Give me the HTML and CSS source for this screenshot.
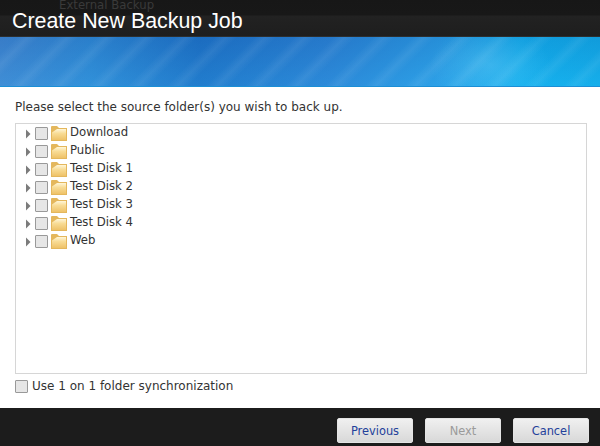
FILE: index.html
```html
<!DOCTYPE html>
<html lang="en">
<head>
<meta charset="utf-8">
<title>Create New Backup Job</title>
<link rel="stylesheet" href="styles.css">
</head>
<body>
<div class="dialog">
  <header class="title-bar">
    <span class="ghost">External Backup</span>
    <h1 class="title">Create New Backup Job</h1>
  </header>
  <div class="banner"></div>
  <main class="content">
    <p class="prompt">Please select the source folder(s) you wish to back up.</p>
    <ul class="tree">
      <li class="row"><svg class="arrow" viewBox="0 0 6 10"><path d="M1 0.5 5.5 5 1 9.5Z"/></svg><span class="check"></span><svg class="folder" viewBox="0 0 16 15"><use href="#f"/></svg><span>Download</span></li>
      <li class="row"><svg class="arrow" viewBox="0 0 6 10"><path d="M1 0.5 5.5 5 1 9.5Z"/></svg><span class="check"></span><svg class="folder" viewBox="0 0 16 15"><use href="#f"/></svg><span>Public</span></li>
      <li class="row"><svg class="arrow" viewBox="0 0 6 10"><path d="M1 0.5 5.5 5 1 9.5Z"/></svg><span class="check"></span><svg class="folder" viewBox="0 0 16 15"><use href="#f"/></svg><span>Test Disk 1</span></li>
      <li class="row"><svg class="arrow" viewBox="0 0 6 10"><path d="M1 0.5 5.5 5 1 9.5Z"/></svg><span class="check"></span><svg class="folder" viewBox="0 0 16 15"><use href="#f"/></svg><span>Test Disk 2</span></li>
      <li class="row"><svg class="arrow" viewBox="0 0 6 10"><path d="M1 0.5 5.5 5 1 9.5Z"/></svg><span class="check"></span><svg class="folder" viewBox="0 0 16 15"><use href="#f"/></svg><span>Test Disk 3</span></li>
      <li class="row"><svg class="arrow" viewBox="0 0 6 10"><path d="M1 0.5 5.5 5 1 9.5Z"/></svg><span class="check"></span><svg class="folder" viewBox="0 0 16 15"><use href="#f"/></svg><span>Test Disk 4</span></li>
      <li class="row"><svg class="arrow" viewBox="0 0 6 10"><path d="M1 0.5 5.5 5 1 9.5Z"/></svg><span class="check"></span><svg class="folder" viewBox="0 0 16 15"><use href="#f"/></svg><span>Web</span></li>
    </ul>
    <div class="sync"><span class="check"></span><span>Use 1 on 1 folder synchronization</span></div>
  </main>
  <footer class="actions">
    <button class="btn" type="button">Previous</button>
    <button class="btn btn-disabled" type="button">Next</button>
    <button class="btn" type="button">Cancel</button>
  </footer>
</div>
<svg class="defs" width="0" height="0">
  <defs>
    <linearGradient id="fg" x1="0" y1="0" x2="0" y2="1">
      <stop offset="0" stop-color="#fff6d8"/>
      <stop offset="0.4" stop-color="#f8dc96"/>
      <stop offset="1" stop-color="#eec268"/>
    </linearGradient>
    <g id="f">
      <path d="M0 15V1Q0 0 1 0H6L8 2H16V15Z" fill="#e4b75c"/>
      <path d="M1 14V6.5L6 3H15V14Z" fill="url(#fg)"/>
    </g>
  </defs>
</svg>
</body>
</html>
```
FILE: styles.css
```css
* { box-sizing: border-box; }
html, body { margin: 0; padding: 0; }
body {
  width: 600px;
  height: 446px;
  overflow: hidden;
  background: #fff;
  font-family: "DejaVu Sans", Verdana, sans-serif;
  font-size: 12px;
  color: #333;
}
.defs { position: absolute; }
.dialog { display: flex; flex-direction: column; height: 446px; }
.title-bar {
  position: relative;
  height: 37px;
  flex: none;
  display: flex;
  align-items: flex-end;
  overflow: hidden;
  padding: 0 0 3px 12px;
  background: linear-gradient(#171717 0, #181818 15px, #222 16px, #1e1e1e 36px, #3a3f42 37px);
}
.ghost {
  position: absolute;
  left: 59px;
  top: 0;
  font-size: 11.7px;
  line-height: 10px;
  color: #3a3a3a;
}
.title {
  position: relative;
  margin: 0;
  font-family: "Liberation Sans", Arial, sans-serif;
  font-size: 21.4px;
  font-weight: 400;
  line-height: 26px;
  color: #fff;
}
.banner {
  height: 50px;
  flex: none;
  border-bottom: 1px solid #1b8fd6;
  background:
    repeating-linear-gradient(135deg, rgba(255,255,255,0) 0 12px, rgba(255,255,255,0.065) 20px, rgba(255,255,255,0) 28px),
    radial-gradient(ellipse 60px 40px at 490px 28px, rgba(130,220,255,0.3), rgba(130,220,255,0)),
    linear-gradient(180deg, rgba(20,70,150,0.18), rgba(60,180,240,0.15)),
    linear-gradient(90deg, #4088d2 0, #2f8bd6 90px, #1d74c8 200px, #2a84d6 330px, #2a9ee6 440px, #0fb0ee 520px, #10aeea 600px);
}
.content {
  flex: 1;
  min-height: 0;
  display: flex;
  flex-direction: column;
  padding: 13px 13px 0 15px;
}
.prompt { margin: 0 0 8px; line-height: 15px; height: 15px; color: #333; }
.tree {
  list-style: none;
  margin: 0;
  padding: 0 0 0 9px;
  height: 251px;
  flex: none;
  border: 1px solid #d6d6d6;
  background: #fff;
  font-size: 11.7px;
}
.row { display: flex; align-items: center; height: 16px; margin-bottom: 2px; }
.arrow { width: 6px; height: 10px; fill: #7b7b7b; margin-right: 4px; position: relative; top: 2px; }
.check {
  flex: none;
  display: block;
  width: 13px;
  height: 13px;
  border: 1px solid #999;
  border-radius: 1px;
  background: #e6e6e6;
}
.row .check { position: relative; top: 1px; }
.folder { width: 16px; height: 15px; margin: 0 3px; flex: none; position: relative; top: 1px; }
.sync { display: flex; align-items: center; gap: 4px; height: 16px; margin-top: 4px; }
.actions {
  height: 38px;
  flex: none;
  display: flex;
  justify-content: flex-end;
  align-items: flex-start;
  gap: 12px;
  padding: 10px 11px 0 0;
  background: #1c1c1c;
}
.btn {
  width: 76px;
  height: 25px;
  padding: 0;
  border: 1px solid #e4e4e4;
  border-radius: 2px;
  background: linear-gradient(#f0f0f0, #d8d8d8);
  font-family: "DejaVu Sans", Verdana, sans-serif;
  font-size: 11.4px;
  color: #23409a;
}
.btn-disabled { color: #9a9a9a; }
```
